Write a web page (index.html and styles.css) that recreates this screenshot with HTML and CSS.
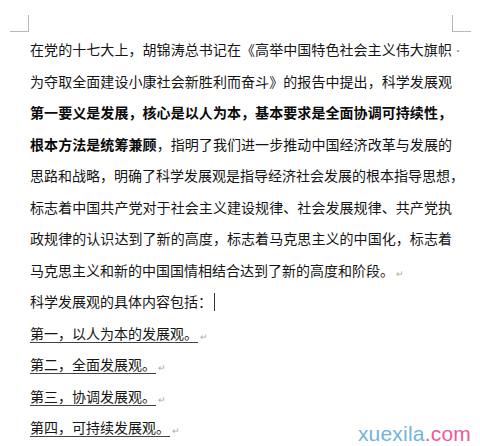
FILE: index.html
```html
<!DOCTYPE html>
<html lang="zh-CN">
<head>
  <meta charset="UTF-8">
  <meta name="viewport" content="width=device-width, initial-scale=1.0">
  <title>科学发展观</title>
  <link rel="stylesheet" href="styles.css">
</head>
<body>
  <div class="page">
    <div class="doc">
      <p class="para">
        <span class="line full">在党的十七大上，胡锦涛总书记在《高举中国特色社会主义伟大旗帜<span class="dot">·</span></span>
        <span class="line full">为夺取全面建设小康社会新胜利而奋斗》的报告中提出，科学发展观</span>
        <span class="line full"><b>第一要义是发展，核心是以人为本，基本要求是全面协调可持续性，</b></span>
        <span class="line full"><b>根本方法是统筹兼顾</b>，指明了我们进一步推动中国经济改革与发展的</span>
        <span class="line full">思路和战略，明确了科学发展观是指导经济社会发展的根本指导思想，</span>
        <span class="line full">标志着中国共产党对于社会主义建设规律、社会发展规律、共产党执</span>
        <span class="line full">政规律的认识达到了新的高度，标志着马克思主义的中国化，标志着</span>
        <span class="line">马克思主义和新的中国国情相结合达到了新的高度和阶段。<span class="mark">↵</span></span>
      </p>
      <p class="line">科学发展观的具体内容包括：<span class="cursor"></span></p>
      <ul class="points">
        <li><u>第一，以人为本的发展观。</u><span class="mark">↵</span></li>
        <li><u>第二，全面发展观。</u><span class="mark">↵</span></li>
        <li><u>第三，协调发展观。</u><span class="mark">↵</span></li>
        <li><u>第四，可持续发展观。</u><span class="mark">↵</span></li>
      </ul>
    </div>
    <div class="watermark"><span class="wm-name">xuexila</span><span class="wm-com">.com</span></div>
  </div>
</body>
</html>
```

FILE: styles.css
```css
body {
  margin: 0;
  background: #fff;
  color: #151515;
  font-family: "Noto Sans CJK SC", "Noto Sans", sans-serif;
}

.page {
  position: relative;
  width: 480px;
  height: 446px;
  overflow: hidden;
}

/* page corner marks */
.page::before,
.page::after {
  content: "";
  position: absolute;
  top: 15px;
  width: 18px;
  height: 16px;
  border-bottom: 1px solid #b8b8b8;
}

.page::before {
  left: 10px;
  border-right: 1px solid #b8b8b8;
}

.page::after {
  left: 452px;
  border-left: 1px solid #b8b8b8;
}

.doc {
  padding: 34px 0 0 30px;
  width: 422px;
  font-size: 14px;
  line-height: 31.5px;
}

.para,
.doc p {
  margin: 0;
}

.line {
  display: block;
  white-space: nowrap;
}

.line.full {
  text-align: justify;
  text-align-last: justify;
}

.line b {
  font-weight: 700;
  color: #0a0a0a;
}

.dot {
  display: inline-block;
  width: 0;
  color: #999;
  font-size: 10px;
  line-height: 0;
  text-indent: 1px;
}

.mark {
  color: #aaa;
  font-size: 9px;
  line-height: 0;
  margin-left: 2px;
  vertical-align: -1px;
}

.cursor {
  display: inline-block;
  width: 0;
  height: 18px;
  border-left: 1px solid #333;
  margin-left: 2px;
  vertical-align: -4px;
}

.points {
  list-style: none;
  margin: 0;
  padding: 0;
}

.points li {
  line-height: 31.5px;
}

.points u {
  text-decoration: underline;
  text-decoration-color: #444;
  text-underline-offset: 3px;
}

.watermark {
  position: absolute;
  right: 9px;
  bottom: 0;
  font-family: "Liberation Sans", Arial, sans-serif;
  font-size: 21px;
  line-height: 24px;
  letter-spacing: 0.2px;
}

.wm-name {
  color: #72b4da;
}

.wm-com {
  color: #ea5a9e;
}
```
